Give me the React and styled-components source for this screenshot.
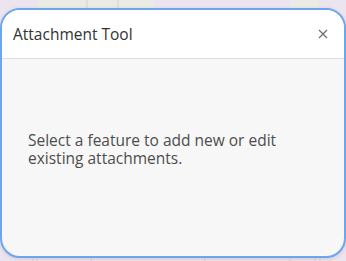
import React from "react";
import styled, { createGlobalStyle } from "styled-components";

const GlobalStyle = createGlobalStyle`
  html, body {
    margin: 0;
    padding: 0;
    width: 346px;
    height: 261px;
    overflow: hidden;
    background: #ece4ee;
  }
`;

const Stage = styled.div`
  position: relative;
  width: 346px;
  height: 261px;
  overflow: hidden;
  font-family: "Open Sans", "Noto Sans", sans-serif;
`;

const MapBackdrop = styled.svg`
  position: absolute;
  inset: 0;
`;

const Frame = styled.div`
  position: relative;
  padding-top: 8px;
`;

const Panel = styled.div`
  width: 346px;
  height: 250px;
  box-sizing: border-box;
  border: 2px solid #6ea6ee;
  border-radius: 20px;
  background: #f7f7f7;
  overflow: hidden;
  display: flex;
  flex-direction: column;
  box-shadow: 0 1px 4px rgba(0, 0, 0, 0.12);
`;

const Header = styled.div`
  height: 48px;
  flex: none;
  background: #ffffff;
  border-bottom: 1px solid #dfdfdf;
  display: flex;
  align-items: center;
  justify-content: space-between;
  padding: 0 12px 0 11px;
`;

const Title = styled.h2`
  margin: 0;
  font-size: 15.5px;
  font-weight: 400;
  color: #323232;
`;

const CloseButton = styled.button`
  border: 0;
  background: none;
  padding: 4px;
  display: flex;
  color: #6a6a6a;
  cursor: pointer;
`;

const Body = styled.div`
  flex: 1;
  padding: 72px 20px 0 26px;
`;

const Message = styled.p`
  margin: 0;
  font-size: 15.5px;
  line-height: 18px;
  color: #4d4d4d;
`;

function App() {
  return (
    <Stage>
      <GlobalStyle />
      <MapBackdrop width="346" height="261" viewBox="0 0 346 261">
        <rect x="0" y="0" width="346" height="261" fill="#ece4ee" />
        <rect x="37" y="0" width="116" height="12" fill="#ebebe5" />
        <line x1="87" y1="0" x2="87" y2="12" stroke="#d6d3d6" />
        <line x1="118" y1="0" x2="118" y2="12" stroke="#d6d3d6" />
        <rect x="291" y="0" width="28" height="12" fill="#ebebe5" />
        <line x1="33" y1="250" x2="33" y2="261" stroke="#d6d3d6" />
        <line x1="37" y1="250" x2="37" y2="261" stroke="#d6d3d6" />
        <line x1="91" y1="250" x2="91" y2="261" stroke="#d6d3d6" />
        <line x1="205" y1="250" x2="205" y2="261" stroke="#d6d3d6" />
        <line x1="290" y1="250" x2="290" y2="261" stroke="#d6d3d6" />
        <line x1="315" y1="250" x2="315" y2="261" stroke="#d6d3d6" />
        <line x1="320" y1="250" x2="320" y2="261" stroke="#d6d3d6" />
      </MapBackdrop>
      <Frame>
        <Panel>
          <Header>
            <Title>Attachment Tool</Title>
            <CloseButton aria-label="Close">
              <svg width="10" height="10" viewBox="0 0 10 10">
                <path d="M1 1 L9 9 M9 1 L1 9" stroke="currentColor" strokeWidth="1.2" fill="none" />
              </svg>
            </CloseButton>
          </Header>
          <Body>
            <Message>
              Select a feature to add new or edit existing attachments.
            </Message>
          </Body>
        </Panel>
      </Frame>
    </Stage>
  );
}

export default App;
